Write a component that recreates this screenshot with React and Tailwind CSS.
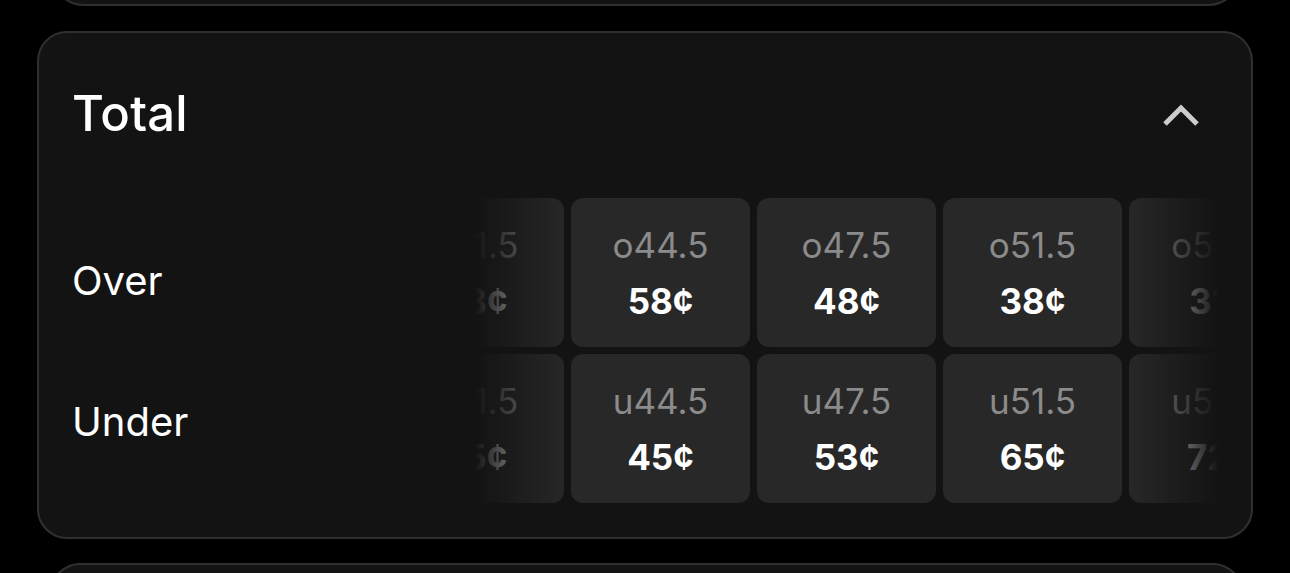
import React from 'react';

const columns = [
  { over: 'o41.5', overPrice: '68¢', under: 'u41.5', underPrice: '35¢' },
  { over: 'o44.5', overPrice: '58¢', under: 'u44.5', underPrice: '45¢' },
  { over: 'o47.5', overPrice: '48¢', under: 'u47.5', underPrice: '53¢' },
  { over: 'o51.5', overPrice: '38¢', under: 'u51.5', underPrice: '65¢' },
  { over: 'o54.5', overPrice: '31¢', under: 'u54.5', underPrice: '72¢' },
];

const Tile = ({ line, price }) => (
  <button className="w-[179px] h-[149px] shrink-0 rounded-[12px] bg-[#282828] flex flex-col items-center justify-center gap-[17px] pb-[1px]">
    <span className="text-[35px] leading-[40px] text-[#8b8b8b]">{line}</span>
    <span className="text-[35px] leading-[38px] font-bold text-white">{price}</span>
  </button>
);

const App = () => {
  return (
    <div className="h-screen bg-black overflow-hidden select-none" style={{ fontFamily: 'Inter, "Noto Sans", sans-serif' }}>
      {/* previous card, only its bottom edge shows */}
      <div className="h-[6px] overflow-hidden flex flex-col justify-end mx-[53px] w-[1186px]">
        <div className="h-[60px] shrink-0 rounded-b-[30px] border-2 border-t-0 border-[#2f2f2f] bg-[#131313]" />
      </div>

      {/* Total market */}
      <div className="mt-[25px] ml-[37px] w-[1216px] h-[508px] rounded-[30px] border-2 border-[#303030] bg-[#131313]">
        {/* Header */}
        <div className="h-[162px] flex items-center justify-between pl-[33px] pr-[50px]">
          <h2 className="text-[49px] font-medium text-white tracking-[0.2px]">Total</h2>
          <svg width="40" height="28" viewBox="0 0 40 28" className="text-[#cdcdcd]">
            <path d="M4 24 L20 8 L36 24" fill="none" stroke="currentColor" strokeWidth="5" />
          </svg>
        </div>

        {/* Body */}
        <div className="flex pt-[3px]">
          <div className="w-[436px] shrink-0 pl-[33px] pt-[59px] flex flex-col gap-[93px]">
            <span className="text-[40px] leading-[48px] text-white">Over</span>
            <span className="text-[40px] leading-[48px] text-white">Under</span>
          </div>

          <div className="relative w-[743px] overflow-hidden">
            <div className="flex gap-[7px] -ml-[90px]">
              {columns.map((c) => (
                <div key={c.over} className="flex flex-col gap-[7px]">
                  <Tile line={c.over} price={c.overPrice} />
                  <Tile line={c.under} price={c.underPrice} />
                </div>
              ))}
            </div>
            <div className="absolute inset-y-0 left-0 w-[95px] bg-gradient-to-r from-[#131313] to-[#131313]/0" />
            <div className="absolute inset-y-0 right-0 w-[92px] bg-gradient-to-l from-[#131313] to-[#131313]/0" />
          </div>
        </div>
      </div>

      {/* next card, only its top edge shows */}
      <div className="mt-[24px] ml-[50px] w-[1193px] h-[10px] overflow-hidden">
        <div className="h-[60px] rounded-t-[30px] border-2 border-b-0 border-[#2f2f2f] bg-[#131313]" />
      </div>
    </div>
  );
};

export default App;
